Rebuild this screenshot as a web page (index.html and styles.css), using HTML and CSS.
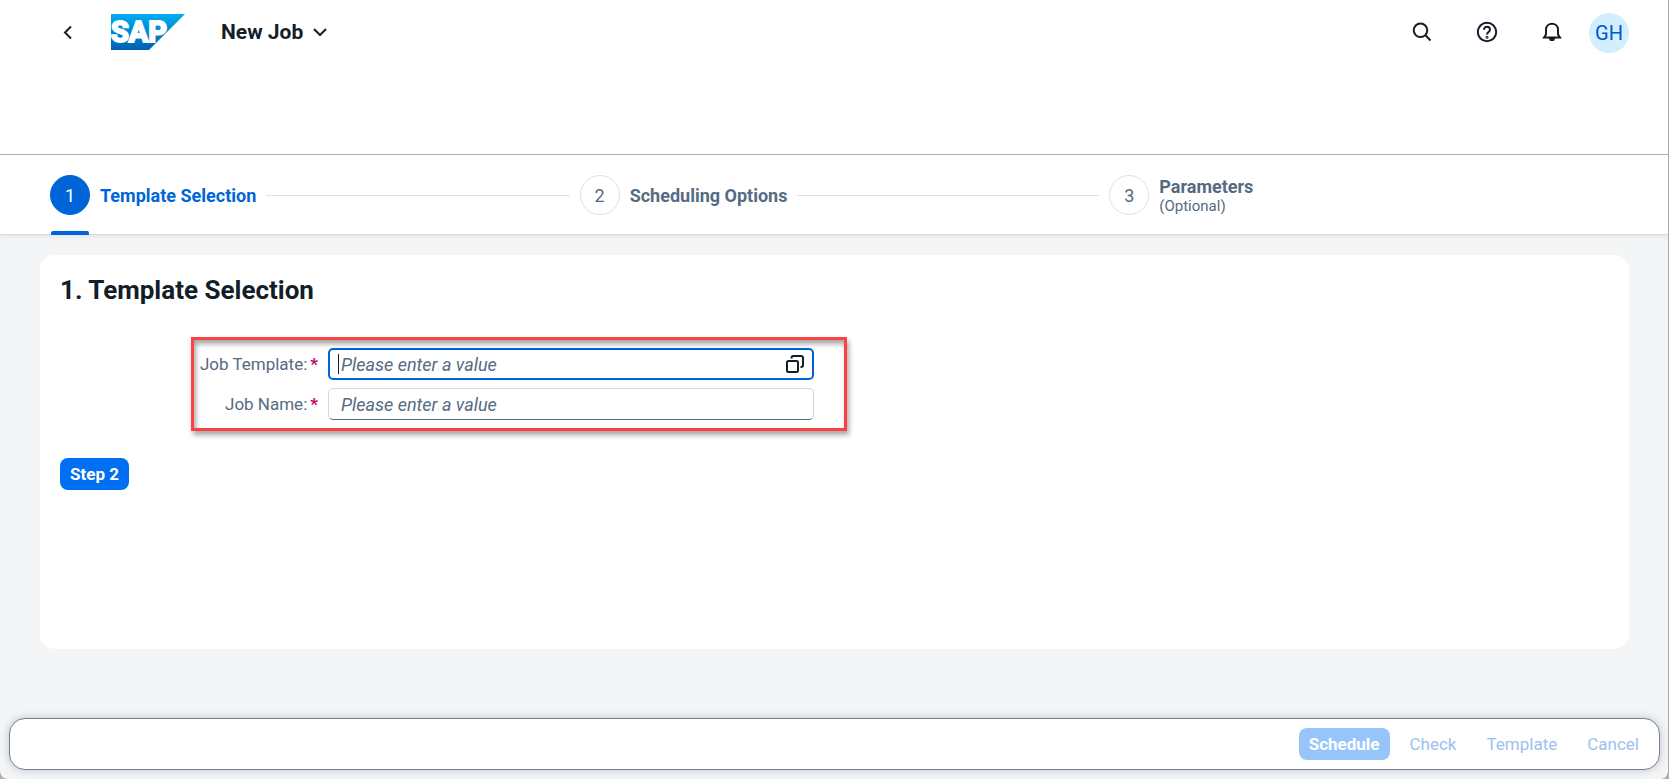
FILE: index.html
```
<!DOCTYPE html>
<html lang="en">
<head>
<meta charset="utf-8">
<meta name="viewport" content="width=device-width, initial-scale=1.0">
<title>New Job</title>
<link rel="stylesheet" href="styles.css">
</head>
<body>
<div class="app">

	<header class="shell">
		<button class="icon-btn back" type="button" aria-label="Back">
			<svg width="20" height="20" viewBox="0 0 20 20"><path d="M13 4.500 L7 10.500 L13 16.500"/></svg>
		</button>
		<a class="logo" href="#" aria-label="SAP">
			<svg width="74" height="36" viewBox="0 0 74 36">
				<defs>
					<linearGradient id="sapblue" x1="0" y1="0" x2="0" y2="1">
						<stop offset="0" stop-color="#00aeef"/>
						<stop offset="0.5" stop-color="#0087d2"/>
						<stop offset="1" stop-color="#0060b0"/>
					</linearGradient>
				</defs>
				<path d="M0 0 H74 L38 36 H0 Z" fill="url(#sapblue)"/>
				<text x="0" y="28" class="logo-text">SAP</text>
			</svg>
		</a>
		<button class="app-title" type="button">New Job
			<svg width="14" height="10" viewBox="0 0 14 10"><path d="M1 2 L7 8 L13 2"/></svg>
		</button>
		<div class="shell-actions">
			<button class="icon-btn" type="button" aria-label="Search">
				<svg width="22" height="22" viewBox="0 0 22 22"><circle cx="9.500" cy="9.300" r="6.800"/><path d="M14.500 14.300 L19.500 19.500"/></svg>
			</button>
			<button class="icon-btn" type="button" aria-label="Help">
				<svg width="22" height="22" viewBox="0 0 22 22"><circle cx="11" cy="11" r="9.200"/><path d="M8 8.800 C8 4.800 14 4.900 14 8.800 C14 11 11 11.200 11 13.500"/><circle cx="11" cy="16.200" r="0.500"/></svg>
			</button>
			<button class="icon-btn" type="button" aria-label="Notifications">
				<svg width="22" height="22" viewBox="0 0 22 22"><path d="M3 16.500 L5 13.500 V8.500 C5 0.800 17 0.800 17 8.500 V13.500 L19 16.500 Z"/><path class="solid" d="M7.500 17 H14.500 L12.800 20 H9.200 Z"/></svg>
			</button>
			<button class="avatar" type="button">GH</button>
		</div>
	</header>

	<nav class="wizard">
		<ol class="steps">
			<li class="step active">
				<span class="num">1</span>
				<span class="name">Template Selection</span>
				<span class="line"></span>
			</li>
			<li class="step">
				<span class="num">2</span>
				<span class="name">Scheduling Options</span>
				<span class="line"></span>
			</li>
			<li class="step">
				<span class="num">3</span>
				<span class="name">Parameters<small>(Optional)</small></span>
			</li>
		</ol>
	</nav>

	<main class="content">
		<section class="card">
			<h1>1. Template Selection</h1>
			<form class="job-form" onsubmit="return false;">
				<label for="template">Job Template:<b>*</b></label>
				<div class="field focused">
					<input type="text" id="template" placeholder="Please enter a value">
					<button class="value-help" type="button" aria-label="Value help">
						<svg width="20" height="20" viewBox="0 0 20 20"><rect x="2" y="7" width="11" height="11" rx="1.500"/><path d="M6.500 4.500 V4 Q6.500 2 8.500 2 H16 Q18 2 18 4 V11 Q18 13 16 13 H15.500"/></svg>
					</button>
				</div>
				<label for="jobname">Job Name:<b>*</b></label>
				<div class="field">
					<input type="text" id="jobname" placeholder="Please enter a value">
				</div>
			</form>
			<button class="btn primary" type="button">Step 2</button>
		</section>
	</main>

	<footer class="toolbar">
		<button class="btn primary" type="button" disabled>Schedule</button>
		<button class="btn" type="button" disabled>Check</button>
		<button class="btn" type="button" disabled>Template</button>
		<button class="btn" type="button" disabled>Cancel</button>
	</footer>

</div>
</body>
</html>
```
FILE: styles.css
```
* {
	box-sizing: border-box;
}

body {
	margin: 0;
	background: #b5ae98;
	font-family: Roboto, "Liberation Sans", sans-serif;
	font-size: 18px;
	color: #131e29;
}

button {
	font: inherit;
	color: inherit;
	border: 0;
	background: none;
	padding: 0;
}

svg {
	display: block;
	fill: none;
	stroke: #131e29;
	stroke-width: 2;
}

.app {
	display: flex;
	flex-direction: column;
	min-height: 100vh;
	border-right: 1px solid #a5a9ab;
	border-radius: 0 0 8px 8px;
	background: #f4f5f7;
	overflow: hidden;
}

/* shell bar */
.shell {
	display: flex;
	align-items: flex-start;
	height: 155px;
	padding: 12px 39px 0 48px;
	border-bottom: 1px solid #a8b2bc;
	background: #fff;
}

.icon-btn {
	display: flex;
	align-items: center;
	justify-content: center;
	width: 40px;
	height: 40px;
}

.logo {
	margin: 2px 0 0 23px;
}

.logo svg {
	stroke: none;
}

.logo-text {
	font: bold 29px Roboto, sans-serif;
	fill: #fff;
	stroke: #fff;
	stroke-width: 2px;
}

.app-title {
	display: flex;
	align-items: center;
	gap: 10px;
	height: 40px;
	margin-left: 36px;
	font-size: 21px;
	font-weight: bold;
}

.shell-actions {
	display: flex;
	gap: 25px;
	margin-left: auto;
}

.solid {
	fill: #131e29;
	stroke: none;
}

.avatar {
	width: 40px;
	height: 40px;
	margin: 1px 0 0 -8px;
	border-radius: 50%;
	background: #d1efff;
	color: #0057d2;
	font-size: 20px;
}

/* wizard progress */
.wizard {
	height: 80px;
	padding: 0 29px 0 50px;
	border-bottom: 1px solid #d9d9d9;
	background: #fff;
	box-shadow: 0 2px 4px rgba(34, 53, 72, 0.08);
}

.steps {
	display: grid;
	grid-template-columns: repeat(3, 1fr);
	height: 80px;
	margin: 0;
	padding: 0;
	list-style: none;
}

.step {
	position: relative;
	display: flex;
	align-items: center;
	gap: 10px;
	padding-right: 10px;
	color: #556b82;
}

.num {
	display: flex;
	align-items: center;
	justify-content: center;
	width: 40px;
	height: 40px;
	border: 1px solid #e0e0e0;
	border-radius: 50%;
}

.name {
	font-weight: bold;
}

.name small {
	display: block;
	font-size: 15px;
	font-weight: normal;
	line-height: 18px;
}

.line {
	flex: 1;
	height: 1px;
	background: #e0e0e0;
}

.active {
	color: #0064d9;
}

.active .num {
	border-color: #0064d9;
	background: #0064d9;
	color: #fff;
}

.active::after {
	content: "";
	position: absolute;
	left: 1px;
	bottom: 0;
	width: 38px;
	height: 4px;
	border-radius: 2px 2px 0 0;
	background: #0064d9;
}

/* step content */
.content {
	flex: 1;
	padding: 20px 39px 0 40px;
}

.card {
	min-height: 394px;
	padding: 20px;
	border-radius: 15px;
	background: #fff;
}

h1 {
	margin: 0;
	font-size: 26px;
	line-height: 30px;
}

.job-form {
	display: grid;
	grid-template-columns: 1fr 486px;
	align-items: center;
	gap: 8px 10px;
	width: 656px;
	margin: 32px 0 27px 131px;
	padding: 8px 30px 8px 3px;
	border: 3px solid #fb4141;
	box-shadow: 2px 4px 5px rgba(0, 0, 0, 0.35), inset 2px 4px 5px rgba(0, 0, 0, 0.35);
}

.job-form label {
	color: #556b82;
	font-size: 17px;
	text-align: right;
	white-space: nowrap;
}

.job-form label b {
	margin-left: 3px;
	color: #ba066c;
}

.field {
	position: relative;
	display: flex;
	align-items: center;
	height: 32px;
	border: 1px solid #d3d7dd;
	border-bottom-color: #556b82;
	border-radius: 5px;
	background: #fff;
}

.field input {
	flex: 1;
	min-width: 0;
	height: 28px;
	padding: 0 12px;
	border: 0;
	outline: 0;
	background: none;
	font: inherit;
	color: #131e29;
}

.field input::placeholder {
	color: #556b82;
	font-style: italic;
	opacity: 1;
}

.focused {
	border: 2px solid #0064d9;
}

.focused input {
	padding: 0 11px;
}

.focused::before {
	content: "";
	position: absolute;
	left: 8px;
	top: 4px;
	width: 1px;
	height: 20px;
	background: #131e29;
}

.value-help {
	margin-right: 7px;
}

.btn {
	height: 32px;
	padding: 0 10px;
	border-radius: 8px;
	color: #0064d9;
	font-size: 17px;
}

.btn.primary {
	background: #0070f2;
	color: #fff;
	font-weight: bold;
}

.btn:disabled {
	opacity: 0.4;
}

/* floating footer */
.toolbar {
	display: flex;
	align-items: center;
	justify-content: flex-end;
	gap: 10px;
	height: 52px;
	margin: 0 8px 9px 9px;
	padding: 0 10px;
	border: 1px solid #758292;
	border-radius: 16px;
	background: #fff;
	box-shadow: 0 0 8px rgba(34, 53, 72, 0.25);
}
```
